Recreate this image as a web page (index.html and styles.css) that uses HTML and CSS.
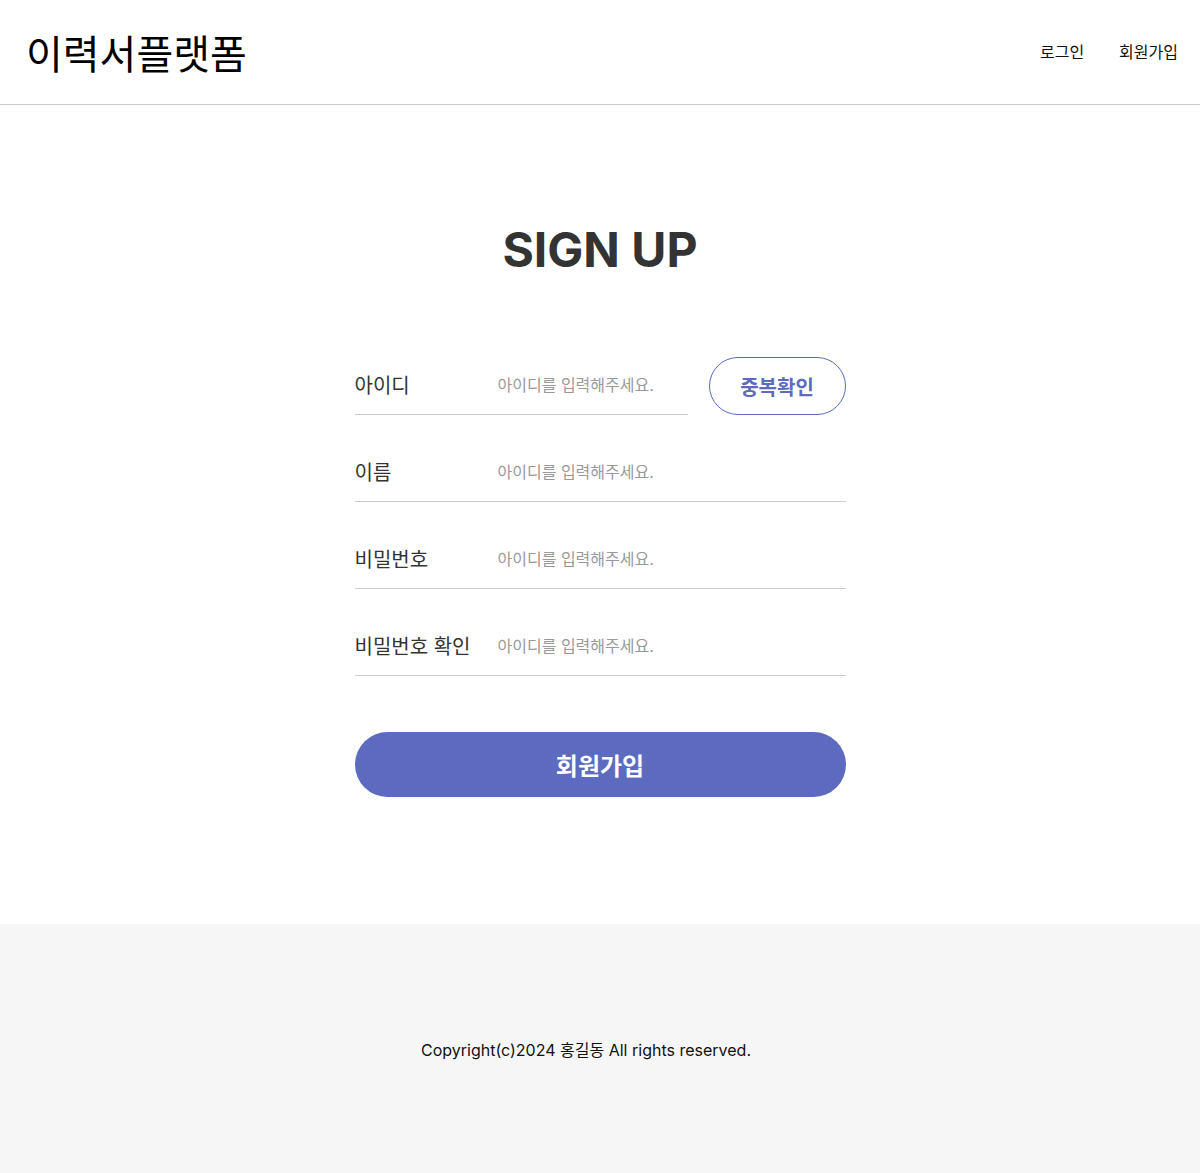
FILE: index.html
```html
<!DOCTYPE html>
<html lang="ko">
<head>
    <meta charset="UTF-8">
    <meta name="viewport" content="width=device-width, initial-scale=1.0">
    <title>회원가입</title>
    <link rel="stylesheet" href="styles.css">
</head>
<body>
    <header class="header">
        <h1 class="logo">이력서플랫폼</h1>
        <nav class="nav">
            <a href="#">로그인</a>
            <a href="#">회원가입</a>
        </nav>
    </header>

    <main class="main">
        <h2 class="title">SIGN UP</h2>

        <form class="signup-form">
            <div class="row">
                <label class="field">
                    <span class="label">아이디</span>
                    <input type="text" placeholder="아이디를 입력해주세요.">
                </label>
                <button type="button" class="check-btn">중복확인</button>
            </div>
            <div class="row">
                <label class="field">
                    <span class="label">이름</span>
                    <input type="text" placeholder="아이디를 입력해주세요.">
                </label>
            </div>
            <div class="row">
                <label class="field">
                    <span class="label">비밀번호</span>
                    <input type="password" placeholder="아이디를 입력해주세요.">
                </label>
            </div>
            <div class="row">
                <label class="field">
                    <span class="label">비밀번호 확인</span>
                    <input type="password" placeholder="아이디를 입력해주세요.">
                </label>
            </div>

            <button type="submit" class="submit-btn">회원가입</button>
        </form>
    </main>

    <footer class="footer">
        <p>Copyright(c)2024 홍길동 All rights reserved.</p>
    </footer>
</body>
</html>
```

FILE: styles.css
```css
/* General */
body {
    margin: 0;
    font-family: 'Inter', 'Noto Sans CJK KR', sans-serif;
    color: #111;
    background: #fff;
}

/* Header */
.header {
    height: 104px;
    display: flex;
    justify-content: space-between;
    align-items: center;
    padding: 0 22px 0 26px;
    border-bottom: 1px solid #ccc;
}

.logo {
    margin: 0;
    font-size: 40px;
    font-weight: 400;
    color: #000;
}

.nav {
    display: flex;
    gap: 35px;
    padding-bottom: 2px;
}

.nav a {
    font-size: 16px;
    color: #111;
    text-decoration: none;
}

/* Main */
.main {
    padding: 115px 0 127px;
}

.title {
    margin: 0 0 77px;
    text-align: center;
    font-size: 48px;
    line-height: 60px;
    font-weight: 700;
    color: #333;
}

.signup-form {
    width: 491px;
    margin: 0 auto;
}

.row {
    display: flex;
    gap: 21px;
    margin-bottom: 29px;
}

.field {
    flex: 1;
    min-width: 0;
    height: 57px;
    box-sizing: content-box;
    display: flex;
    align-items: center;
    padding-bottom: 0;
    border-bottom: 1px solid #ccc;
}

.label {
    width: 143px;
    flex-shrink: 0;
    font-size: 20px;
    color: #333;
    margin-top: -2px;
}

.field input {
    flex: 1;
    min-width: 0;
    border: none;
    outline: none;
    padding: 0;
    margin-top: -2px;
    font-family: inherit;
    font-size: 16px;
    color: #333;
    background: transparent;
}

.field input::placeholder {
    color: #999;
}

.check-btn {
    flex: 0 0 137px;
    height: 58px;
    border: 1px solid #5c6bc0;
    border-radius: 29px;
    background: #fff;
    color: #5c6bc0;
    font-family: inherit;
    font-size: 20px;
    font-weight: 700;
    cursor: pointer;
}

.submit-btn {
    display: block;
    width: 100%;
    height: 65px;
    margin-top: 56px;
    border: none;
    border-radius: 33px;
    background: #5c6bc0;
    color: #fff;
    font-family: inherit;
    font-size: 24px;
    font-weight: 700;
    cursor: pointer;
}

/* Footer */
.footer {
    height: 249px;
    background: #f6f6f6;
    display: flex;
    justify-content: center;
    align-items: center;
    padding: 0 28px 3px 0;
}

.footer p {
    margin: 0;
    font-size: 16px;
    color: #111;
}
```
